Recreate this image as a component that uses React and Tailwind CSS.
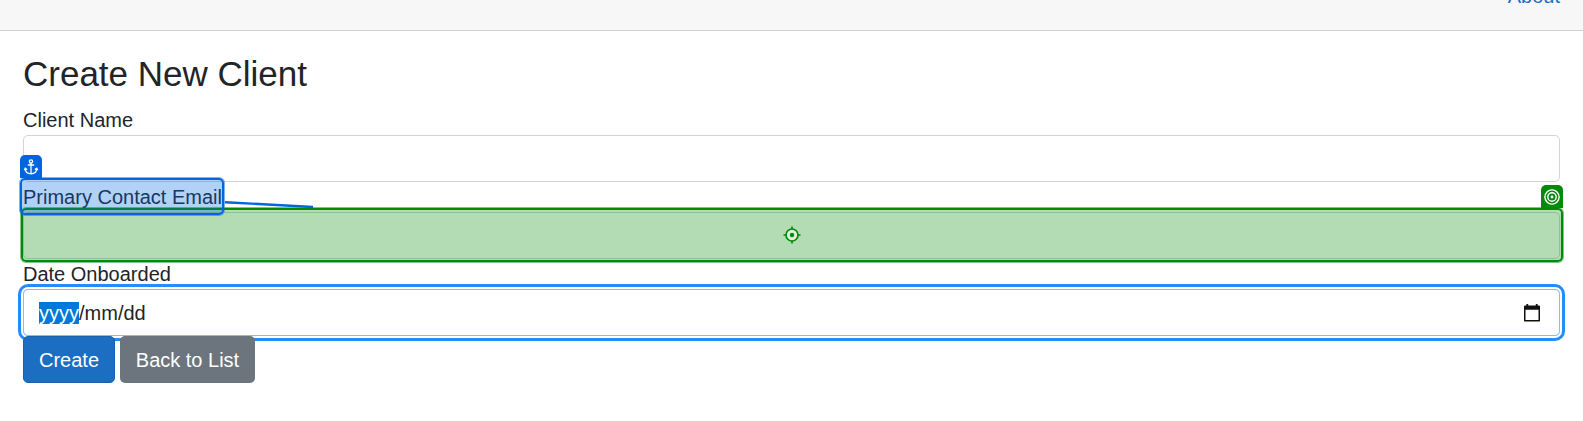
const Field = ({ label, children }) => (
  <div className="h-[77px]">
    <div className="h-[30px] whitespace-nowrap">{label}</div>
    {children}
  </div>
);

const Anchor = () => (
  <svg className="h-4 w-4" viewBox="0 0 16 16" fill="none" stroke="#fff" strokeWidth="1.3">
    <circle cx="8" cy="2.4" r="1.6" />
    <path d="M8 4V14.8M4.8 6H11.2M2.2 9.8C2.4 12.8 4.8 14.8 8 14.8S13.6 12.8 13.8 9.8M1.3 11.3L2.2 9.3L4.1 10.6M14.7 11.3L13.8 9.3L11.9 10.6" />
  </svg>
);

const Target = () => (
  <svg className="h-4 w-4" viewBox="0 0 16 16" fill="none" stroke="#fff" strokeWidth="1.4">
    <circle cx="8" cy="8" r="7.1" />
    <circle cx="8" cy="8" r="4.2" />
    <circle cx="8" cy="8" r="1.4" fill="#fff" stroke="none" />
  </svg>
);

const Crosshair = () => (
  <svg className="mr-px h-[18px] w-[18px]" viewBox="0 0 18 18" fill="none" stroke="#048a0b" strokeWidth="1.7">
    <circle cx="9" cy="9" r="6" fill="#dcf0dc" />
    <circle cx="9" cy="9" r="2.2" fill="#048a0b" stroke="none" />
    <path d="M9 0.5V3M9 15V17.5M0.5 9H3M15 9H17.5" />
  </svg>
);

const Calendar = () => (
  <svg className="h-[18px] w-4" viewBox="0 0 16 18" fill="#101010">
    <path fillRule="evenodd" d="M2.4 0H4.2V1.6H11.8V0H13.6V1.6H14.8Q16 1.6 16 2.8V16.4Q16 17.6 14.8 17.6H1.2Q0 17.6 0 16.4V2.8Q0 1.6 1.2 1.6H2.4ZM1.5 5.8V16.1H14.5V5.8Z" />
  </svg>
);

export default function App() {
  return (
    <div className="h-[421px] overflow-hidden bg-white font-['Liberation_Sans',Arial,sans-serif] text-[20px] leading-[30px] text-[#212529]">
      <header className="flex h-[31px] items-start justify-end border-b border-[#d0d0d0] bg-[#f7f7f7] pr-[23px]">
        <a className="-mt-[19px] text-[#1b6ec2]">About</a>
      </header>
      <main className="px-[23px] pt-[22px]">
        <h1 className="mb-[10px] text-[35px] leading-[42px]">Create New Client</h1>
        <Field label="Client Name">
          <div className="h-[47px] rounded-[5px] border border-[#ced4da]" />
        </Field>
        <Field
          label={
            <div className="relative z-20 w-fit">
              Primary Contact Email
              <div className="absolute -top-[27px] -left-[3px] flex h-[23px] w-[22px] items-center justify-center rounded-t-[5px] bg-[#0066e0]">
                <Anchor />
              </div>
              <div className="absolute -top-[4px] -left-[3px] h-[37px] w-[204px] rounded-[5px] border-2 border-[#0066e0] bg-[#0066e0]/30 shadow-[0_0_0_1px_rgba(0,102,224,0.5)]" />
              <svg className="absolute top-[18px] left-[202px] h-[9px] w-[89px]" viewBox="0 0 89 9">
                <path d="M0 2.2L88 7" stroke="#0066e0" strokeWidth="2.4" />
              </svg>
            </div>
          }
        >
          <div className="relative z-10 h-[47px] rounded-[5px] border border-[#ced4da]">
            <div className="absolute -top-[28px] -right-[4px] flex h-[23px] w-[22px] items-center justify-center rounded-t-[5px] bg-[#048a0b]">
              <Target />
            </div>
            <div className="absolute -top-[5px] -right-[4px] -bottom-[4px] -left-[3px] flex items-center justify-center rounded-[5px] border-2 border-[#048a0b] bg-[#048a0b]/30 shadow-[0_0_0_1px_rgba(4,138,11,0.5)]">
              <Crosshair />
            </div>
          </div>
        </Field>
        <Field label="Date Onboarded">
          <div className="flex h-[47px] items-center rounded-[5px] border border-[#8bb9fe] pr-[19px] pl-[15px] shadow-[0_0_0_2px_white,0_0_0_5px_#258cfb]">
            <span className="bg-[#0078d7] leading-[22px] text-white">yyyy</span>
            <span className="flex-1">/mm/dd</span>
            <Calendar />
          </div>
        </Field>
        <div className="relative flex gap-[5px] text-white">
          <button className="h-[47px] w-[92px] rounded-[5px] border border-[#1861ac] bg-[#1b6ec2]">Create</button>
          <button className="h-[47px] w-[135px] rounded-[5px] bg-[#6c757d]">Back to List</button>
        </div>
      </main>
    </div>
  );
}
